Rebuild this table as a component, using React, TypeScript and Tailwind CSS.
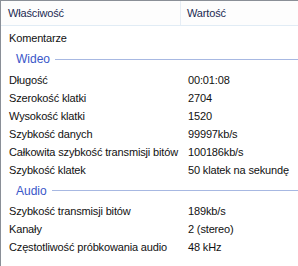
import React from "react";

type Row = [string, string];

const general: Row[] = [["Komentarze", ""]];

const video: Row[] = [
  ["Długość", "00:01:08"],
  ["Szerokość klatki", "2704"],
  ["Wysokość klatki", "1520"],
  ["Szybkość danych", "99997kb/s"],
  ["Całkowita szybkość transmisji bitów", "100186kb/s"],
  ["Szybkość klatek", "50 klatek na sekundę"],
];

const audio: Row[] = [
  ["Szybkość transmisji bitów", "189kb/s"],
  ["Kanały", "2 (stereo)"],
  ["Częstotliwość próbkowania audio", "48 kHz"],
];

const PropRow = ({ name, value }: { name: string; value: string }) => (
  <div className="flex h-[18px] items-center">
    <div className="w-[180px] shrink-0 overflow-hidden whitespace-nowrap pl-[8px]">{name}</div>
    <div className="whitespace-nowrap pl-[7px]">{value}</div>
  </div>
);

const Group = ({ title }: { title: string }) => (
  <div className="flex items-center pl-[15px]">
    <span className="text-[#3a57c9] text-[12px] tracking-normal">{title}</span>
    <div className="ml-[5px] h-px flex-1 bg-[#a7b8e2]" />
  </div>
);

export default function App() {
  return (
    <div
      className="w-[298px] h-[266px] overflow-hidden bg-white border-l border-t border-[#8a8f97] text-[11px] tracking-[-0.15px] text-[#111] flex flex-col"
      style={{ fontFamily: '"Liberation Sans", Arial, sans-serif' }}
    >
      <div className="flex h-[25px] shrink-0 items-center bg-[#fdfdfd] border-b border-[#e1ecf5] text-[#1b2a52]">
        <div className="w-[180px] h-full flex items-center pl-[7px] border-r border-[#e6edf5]">Właściwość</div>
        <div className="pl-[6px]">Wartość</div>
      </div>
      <div className="mt-[3px]">
        {general.map(([n, v]) => (
          <PropRow key={n} name={n} value={v} />
        ))}
      </div>
      <div className="h-[24px] flex flex-col justify-center">
        <Group title="Wideo" />
      </div>
      {video.map(([n, v]) => (
        <PropRow key={n} name={n} value={v} />
      ))}
      <div className="h-[23px] flex flex-col justify-center">
        <Group title="Audio" />
      </div>
      {audio.map(([n, v]) => (
        <PropRow key={n} name={n} value={v} />
      ))}
    </div>
  );
}
